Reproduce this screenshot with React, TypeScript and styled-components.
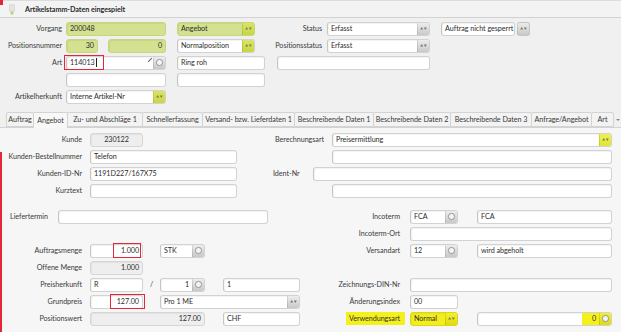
import React from 'react';
import styled, { createGlobalStyle } from 'styled-components';

const GlobalStyle = createGlobalStyle`
  html, body { margin: 0; padding: 0; background: #f0f0f0; }
  body { font-family: Lato, "Open Sans", "Liberation Sans", sans-serif; font-size: 7.2px; letter-spacing: -0.05px; color: #333; }
  * { box-sizing: border-box; }
`;

type Tone = 'white' | 'green' | 'grey' | 'yellow';
type BtnTone = 'grey' | 'green' | 'lime' | 'yellow';

const toneBg: Record<Tone, string> = {
  white: '#ffffff',
  green: '#d3e191',
  grey: '#eeeeee',
  yellow: '#f2ee1e',
};
const toneBorder: Record<Tone, string> = {
  white: '#d2d2d2',
  green: '#c6d67f',
  grey: '#d6d6d6',
  yellow: '#dcd816',
};
const btnBg: Record<BtnTone, string> = {
  grey: 'linear-gradient(#ededed, #c8c8c8)',
  green: 'linear-gradient(#d9e55e, #c7d644)',
  lime: 'linear-gradient(#eef34c, #dde535)',
  yellow: 'linear-gradient(#f4f02a, #e0da14)',
};

const Screen = styled.div`
  position: relative;
  width: 621px;
  height: 332px;
  overflow: hidden;
  display: flex;
  flex-direction: column;
  background: #f0f0f0;
`;

const Header = styled.header`
  flex: none;
  height: 18px;
  display: flex;
  align-items: center;
  gap: 10px;
  padding-left: 9px;
  border-top: 1px solid #dcdcdc;
  border-bottom: 1px solid #d2d2d2;
  background: #f3f3f3;
`;

const Title = styled.h1`
  margin: 0;
  font-size: 7.2px;
  font-weight: 700;
  color: #2a2a2a;
`;

const Form = styled.section`
  flex: none;
  display: flex;
  flex-direction: column;
  padding: 2px 0 7px;
`;

const Row = styled.div<{ $mt?: number }>`
  flex: none;
  display: flex;
  align-items: center;
  height: 17px;
  margin-top: ${(p) => p.$mt ?? 0}px;
`;

const Label = styled.span<{ $w: number; $left?: boolean; $pl?: number }>`
  flex: none;
  width: ${(p) => p.$w}px;
  padding-left: ${(p) => p.$pl ?? 0}px;
  text-align: ${(p) => (p.$left ? 'left' : 'right')};
  white-space: nowrap;
  color: #3b3b3b;
`;

const Highlight = styled.span`
  display: inline-block;
  background: #f4f01c;
  padding: 2px 5px 2px 3px;
  color: #333;
`;

const Field = styled.div<{ $w: number; $ml?: number; $tone?: Tone }>`
  position: relative;
  flex: none;
  width: ${(p) => p.$w}px;
  margin-left: ${(p) => p.$ml ?? 0}px;
  height: 14px;
  display: flex;
  align-items: center;
  background: ${(p) => toneBg[p.$tone ?? 'white']};
  border: 1px solid ${(p) => toneBorder[p.$tone ?? 'white']};
  border-left-color: ${(p) => (p.$tone === 'white' || !p.$tone ? '#c6c6c6' : toneBorder[p.$tone])};
  border-radius: 3px;
  box-shadow: inset 1px 1px 1px rgba(0, 0, 0, 0.05);
`;

const Value = styled.span<{ $align?: 'left' | 'right' | 'center' }>`
  flex: 1;
  min-width: 0;
  padding: 0 3px;
  text-align: ${(p) => p.$align ?? 'left'};
  white-space: nowrap;
  overflow: hidden;
  line-height: 12px;
  color: #2d2d2d;
`;

const Caret = styled.span`
  display: inline-block;
  width: 1px;
  height: 9px;
  margin-left: 1px;
  vertical-align: -2px;
  background: #222;
`;

const Btn = styled.span<{ $tone?: BtnTone; $solo?: boolean }>`
  flex: none;
  width: ${(p) => (p.$solo ? 13 : 12)}px;
  height: ${(p) => (p.$solo ? 14 : 12)}px;
  margin-left: ${(p) => (p.$solo ? 2 : 0)}px;
  display: flex;
  align-items: center;
  justify-content: center;
  background: ${(p) => btnBg[p.$tone ?? 'grey']};
  border-radius: ${(p) => (p.$solo ? '3px' : '0 2px 2px 0')};
  border: ${(p) => (p.$solo ? '1px solid #c4c4c4' : 'none')};
  border-left: 1px solid rgba(0, 0, 0, 0.1);
`;

const YellowCell = styled.span`
  flex: none;
  width: 17px;
  height: 12px;
  line-height: 12px;
  padding-right: 3px;
  text-align: right;
  background: #f4f01c;
  color: #333;
`;

const Slash = styled.span`
  flex: none;
  width: 17px;
  text-align: center;
  color: #444;
`;

const PencilMark = styled.span`
  position: absolute;
  right: 12px;
  top: 0px;
  display: flex;
`;

const RedBox = styled.span`
  position: absolute;
  border: 1.5px solid #e3263a;
  pointer-events: none;
`;

const TabBar = styled.nav`
  flex: none;
  height: 16px;
  display: flex;
  align-items: flex-end;
  padding-left: 7px;
  border-bottom: 1px solid #d3d3d3;
`;

const Tab = styled.div<{ $w: number; $active?: boolean }>`
  flex: none;
  width: ${(p) => p.$w}px;
  height: ${(p) => (p.$active ? 16 : 15)}px;
  margin-bottom: ${(p) => (p.$active ? -1 : 0)}px;
  display: flex;
  align-items: center;
  justify-content: center;
  white-space: nowrap;
  overflow: hidden;
  background: ${(p) => (p.$active ? '#f8f8f8' : '#f3f3f3')};
  border: 1px solid #d3d3d3;
  border-bottom: ${(p) => (p.$active ? 'none' : '1px solid #d3d3d3')};
  margin-left: -1px;
  border-radius: 2px 2px 0 0;
  color: #3a3a3a;
`;

const TabMore = styled.span`
  flex: none;
  width: 7px;
  height: 15px;
  display: flex;
  align-items: center;
  justify-content: center;
  &::after {
    content: '';
    border-left: 2px solid transparent;
    border-right: 2px solid transparent;
    border-top: 2px solid #888;
  }
`;

const Panel = styled.section`
  position: relative;
  flex: 1;
  display: flex;
  flex-direction: column;
  padding-top: 3px;
  background: #f6f6f6;
`;

const RedEdge = styled.span`
  position: absolute;
  left: 0;
  top: 24px;
  bottom: 0;
  width: 2px;
  background: #e3263a;
`;

const CornerMark = styled.span`
  position: absolute;
  left: 0;
  top: 0;
  width: 3px;
  height: 5px;
  background: #e3263a;
`;

const Arrows = () => (
  <svg width="7" height="5" viewBox="0 0 7 5">
    <path d="M0.2 3.6 L1.7 1 L3.2 3.6 Z M3.8 1.4 L6.8 1.4 L5.3 4 Z" fill="#7a7a6a" />
  </svg>
);

const Lens = () => (
  <svg width="9" height="9" viewBox="0 0 9 9">
    <circle cx="4.5" cy="4.5" r="3.1" fill="#f4f4f4" stroke="#8c8c8c" strokeWidth="0.9" />
  </svg>
);

const Pencil = () => (
  <svg width="6" height="6" viewBox="0 0 6 6">
    <path d="M0.8 5.2 L1.2 4 L4.4 0.8 L5.2 1.6 L2 4.8 Z" fill="#6a6a6a" />
  </svg>
);

const PinIcon = () => (
  <svg width="6" height="11" viewBox="0 0 6 11">
    <rect x="0.5" y="0.5" width="5" height="7" rx="1.2" fill="#e4e4e4" stroke="#cfcfcf" strokeWidth="0.6" />
    <rect x="1.5" y="7.5" width="3" height="3" rx="0.6" fill="#bcd47a" />
  </svg>
);

const tabs: { label: string; w: number; active?: boolean }[] = [
  { label: 'Auftrag', w: 28 },
  { label: 'Angebot', w: 35, active: true },
  { label: 'Zu- und Abschläge 1', w: 76 },
  { label: 'Schnellerfassung', w: 61 },
  { label: 'Versand- bzw. Lieferdaten 1', w: 93 },
  { label: 'Beschreibende Daten 1', w: 80 },
  { label: 'Beschreibende Daten 2', w: 78 },
  { label: 'Beschreibende Daten 3', w: 82 },
  { label: 'Anfrage/Angebot', w: 61 },
  { label: 'Art', w: 23 },
];

export default function App() {
  return (
    <>
      <GlobalStyle />
      <Screen>
        <CornerMark />
        <Header>
          <PinIcon />
          <Title>Artikelstamm-Daten eingespielt</Title>
        </Header>

        <Form>
          <Row>
            <Label $w={62}>Vorgang</Label>
            <Field $w={100} $ml={4} $tone="green">
              <Value>200048</Value>
            </Field>
            <Field $w={78} $ml={11} $tone="green">
              <Value>Angebot</Value>
              <Btn $tone="green"><Arrows /></Btn>
            </Field>
            <Label $w={67}>Status</Label>
            <Field $w={103} $ml={5}>
              <Value>Erfasst</Value>
              <Btn><Arrows /></Btn>
            </Field>
            <Field $w={74} $ml={11}>
              <Value>Auftrag nicht gesperrt</Value>
            </Field>
            <Btn $solo><Arrows /></Btn>
          </Row>
          <Row>
            <Label $w={62}>Positionsnummer</Label>
            <Field $w={32} $ml={4} $tone="green">
              <Value $align="right">30</Value>
            </Field>
            <Field $w={58} $ml={10} $tone="green">
              <Value $align="right">0</Value>
            </Field>
            <Field $w={78} $ml={11}>
              <Value>Normalposition</Value>
              <Btn $tone="green"><Arrows /></Btn>
            </Field>
            <Label $w={67}>Positionsstatus</Label>
            <Field $w={103} $ml={5}>
              <Value>Erfasst</Value>
              <Btn><Arrows /></Btn>
            </Field>
          </Row>
          <Row>
            <Label $w={62}>Art</Label>
            <Field $w={100} $ml={4}>
              <Value>
                114013
                <Caret />
              </Value>
              <PencilMark><Pencil /></PencilMark>
              <Btn><Lens /></Btn>
              <RedBox style={{ left: -3, top: -2, width: 40, height: 15 }} />
            </Field>
            <Field $w={88} $ml={11}>
              <Value>Ring roh</Value>
            </Field>
            <Field $w={153} $ml={12} />
          </Row>
          <Row>
            <Label $w={62} />
            <Field $w={100} $ml={4} />
            <Field $w={88} $ml={11} />
          </Row>
          <Row>
            <Label $w={62}>Artikelherkunft</Label>
            <Field $w={100} $ml={4}>
              <Value>Interne Artikel-Nr</Value>
              <Btn $tone="green"><Arrows /></Btn>
            </Field>
          </Row>
        </Form>

        <TabBar>
          {tabs.map((t) => (
            <Tab key={t.label} $w={t.w} $active={t.active}>
              {t.label}
            </Tab>
          ))}
          <TabMore />
        </TabBar>

        <Panel>
          <RedEdge />
          <Row>
            <Label $w={82}>Kunde</Label>
            <Field $w={53} $ml={8} $tone="grey">
              <Value $align="center">230122</Value>
            </Field>
            <Label $w={181}>Berechnungsart</Label>
            <Field $w={280} $ml={8}>
              <Value>Preisermittlung</Value>
              <Btn $tone="lime"><Arrows /></Btn>
            </Field>
          </Row>
          <Row>
            <Label $w={82}>Kunden-Bestellnummer</Label>
            <Field $w={147} $ml={8}>
              <Value>Telefon</Value>
            </Field>
            <Field $w={280} $ml={95} />
          </Row>
          <Row>
            <Label $w={82}>Kunden-ID-Nr</Label>
            <Field $w={147} $ml={8}>
              <Value>1191D227/167X75</Value>
            </Field>
            <Label $w={76} $left $pl={36}>Ident-Nr</Label>
            <Field $w={299} />
          </Row>
          <Row>
            <Label $w={82}>Kurztext</Label>
            <Field $w={147} $ml={8} />
            <Field $w={280} $ml={95} />
          </Row>

          <Row $mt={9}>
            <Label $w={58} $left $pl={10}>Liefertermin</Label>
            <Field $w={210} />
            <Label $w={132}>Incoterm</Label>
            <Field $w={48} $ml={10}>
              <Value>FCA</Value>
              <Btn><Lens /></Btn>
            </Field>
            <Field $w={135} $ml={19}>
              <Value>FCA</Value>
            </Field>
          </Row>
          <Row>
            <Label $w={400}>Incoterm-Ort</Label>
            <Field $w={202} $ml={10} />
          </Row>
          <Row>
            <Label $w={82}>Auftragsmenge</Label>
            <Field $w={53} $ml={8}>
              <Value $align="right">1.000</Value>
              <RedBox style={{ left: 22, top: -2, width: 28, height: 15 }} />
            </Field>
            <Field $w={45} $ml={17}>
              <Value>STK</Value>
              <Btn><Lens /></Btn>
            </Field>
            <Label $w={195}>Versandart</Label>
            <Field $w={48} $ml={10}>
              <Value>12</Value>
              <Btn><Lens /></Btn>
            </Field>
            <Field $w={135} $ml={19}>
              <Value>wird abgeholt</Value>
            </Field>
          </Row>
          <Row>
            <Label $w={82}>Offene Menge</Label>
            <Field $w={53} $ml={8} $tone="grey">
              <Value $align="right">1.000</Value>
            </Field>
          </Row>
          <Row>
            <Label $w={82}>Preisherkunft</Label>
            <Field $w={53} $ml={8}>
              <Value>R</Value>
            </Field>
            <Slash>/</Slash>
            <Field $w={45}>
              <Value $align="right">1</Value>
              <Btn><Lens /></Btn>
            </Field>
            <Field $w={77} $ml={18}>
              <Value>1</Value>
            </Field>
            <Label $w={100}>Zeichnungs-DIN-Nr</Label>
            <Field $w={202} $ml={10} />
          </Row>
          <Row>
            <Label $w={82}>Grundpreis</Label>
            <Field $w={53} $ml={8}>
              <Value $align="right">127.00</Value>
              <RedBox style={{ left: 19, top: -2, width: 35, height: 15 }} />
            </Field>
            <Field $w={140} $ml={17}>
              <Value>Pro 1 ME</Value>
              <Btn><Arrows /></Btn>
            </Field>
            <Label $w={100}>Änderungsindex</Label>
            <Field $w={48} $ml={10}>
              <Value>00</Value>
            </Field>
          </Row>
          <Row>
            <Label $w={82}>Positionswert</Label>
            <Field $w={115} $ml={8} $tone="grey">
              <Value $align="right">127.00</Value>
            </Field>
            <Field $w={77} $ml={18}>
              <Value>CHF</Value>
            </Field>
            <Label $w={105}>
              <Highlight>Verwendungsart</Highlight>
            </Label>
            <Field $w={48} $ml={5} $tone="yellow">
              <Value>Normal</Value>
              <Btn $tone="yellow"><Arrows /></Btn>
            </Field>
            <Field $w={135} $ml={19}>
              <Value />
              <YellowCell>0</YellowCell>
              <Btn $tone="yellow"><Lens /></Btn>
            </Field>
          </Row>
        </Panel>
      </Screen>
    </>
  );
}
